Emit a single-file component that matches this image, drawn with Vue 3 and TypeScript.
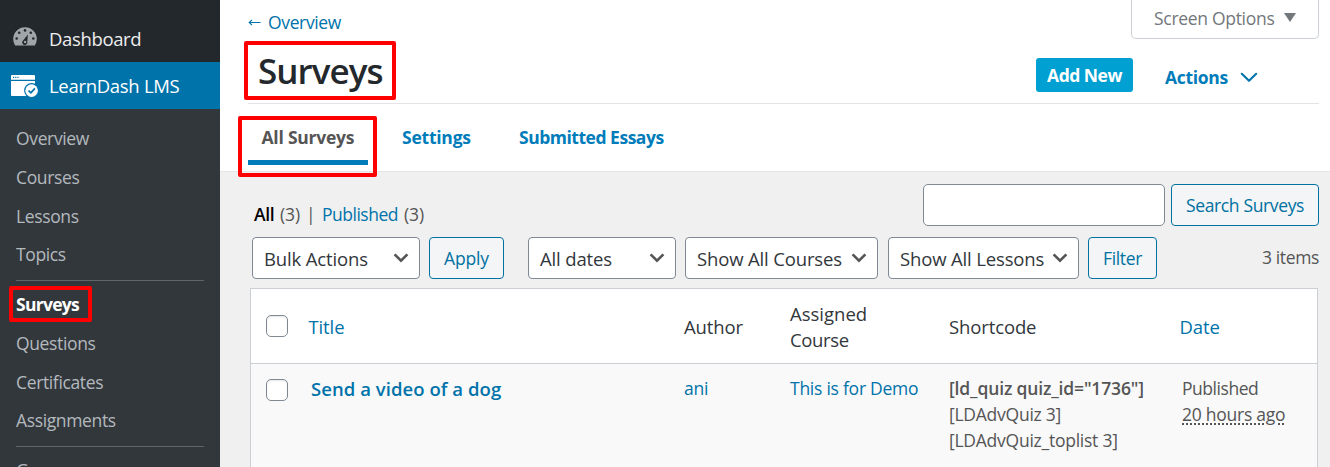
<script setup lang="ts">
interface Select {
  label: string
  cls: string
}

const menuGroups: { label: string; current?: boolean }[][] = [
  [{ label: 'Overview' }, { label: 'Courses' }, { label: 'Lessons' }, { label: 'Topics' }],
  [
    { label: 'Surveys', current: true },
    { label: 'Questions' },
    { label: 'Certificates' },
    { label: 'Assignments' },
  ],
  [{ label: 'Groups' }],
]

const tabs = [
  { label: 'All Surveys', cls: 'tab-all', active: true },
  { label: 'Settings', cls: 'tab-settings', active: false },
  { label: 'Submitted Essays', cls: 'tab-essays', active: false },
]

const filters: Select[] = [
  { label: 'All dates', cls: 'dates' },
  { label: 'Show All Courses', cls: 'courses' },
  { label: 'Show All Lessons', cls: 'lessons' },
]
</script>

<template>
  <div class="app">
    <aside class="sidebar">
      <div class="menu-top">
        <svg class="gauge" width="24" height="19" viewBox="0 0 24 19">
          <path d="M2.1 18.6A11.8 11.8 0 0 1 .2 12a11.8 11.8 0 0 1 23.6 0 11.8 11.8 0 0 1-1.9 6.6z" fill="#a0a5aa" />
          <g fill="#23282d">
            <circle cx="12" cy="3.4" r="1.3" />
            <circle cx="6.2" cy="5.8" r="1.3" />
            <circle cx="17.8" cy="5.8" r="1.3" />
            <circle cx="3.7" cy="11.5" r="1.3" />
            <circle cx="20.3" cy="11.5" r="1.3" />
            <path d="M14.9 7.4l-.6 7.2a2.6 2.6 0 1 1-4-1.3z" />
          </g>
          <circle cx="12.1" cy="15" r="1.2" fill="#a0a5aa" />
        </svg>
        <span>Dashboard</span>
      </div>
      <div class="menu-top selected">
        <svg class="window" width="28" height="24" viewBox="0 0 28 24">
          <path d="M1 1h22a1 1 0 0 1 1 1v3.8H0V2a1 1 0 0 1 1-1z" fill="#fff" />
          <path d="M0 7h24v15H1a1 1 0 0 1-1-1z" fill="#fff" />
          <g fill="#0073aa">
            <rect x="2" y="2.8" width="1.2" height="1.2" />
            <rect x="4.2" y="2.8" width="1.2" height="1.2" />
            <rect x="6.4" y="2.8" width="1.2" height="1.2" />
          </g>
          <circle cx="20.6" cy="16.6" r="7.5" fill="#0073aa" />
          <circle cx="20.6" cy="16.6" r="6.3" fill="#fff" />
          <path d="M17.5 16.6l2.4 2.3 4-4.5" fill="none" stroke="#0073aa" stroke-width="1.7" />
        </svg>
        <span>LearnDash LMS</span>
      </div>
      <nav class="submenu">
        <ul v-for="(group, g) in menuGroups" :key="g">
          <li v-for="item in group" :key="item.label" :class="{ current: item.current }">
            {{ item.label }}
            <i v-if="item.current" class="mark mark-menu"></i>
          </li>
        </ul>
      </nav>
    </aside>

    <main class="main">
      <header class="header">
        <div class="screen-options">
          Screen Options
          <svg width="12" height="9" viewBox="0 0 12 9"><path d="M0 0h12L6 9z" fill="#72777c" /></svg>
        </div>
        <a class="back">
          <svg width="13" height="9" viewBox="0 0 13 9">
            <path d="M12.5 4.5H1.2M4 1.8L1.2 4.5 4 7.2" fill="none" stroke="#0073aa" stroke-width="1.1" />
          </svg>
          Overview
        </a>
        <div class="title-row">
          <h1>Surveys<i class="mark mark-title"></i></h1>
          <button class="add-new">Add New</button>
          <div class="actions">
            <span>Actions</span>
            <svg width="18" height="11" viewBox="0 0 18 11">
              <path d="M1.8 1.8L9 8.8l7.2-7" fill="none" stroke="#0073aa" stroke-width="2.1" stroke-linecap="round" stroke-linejoin="round" />
            </svg>
          </div>
        </div>
        <nav class="tabs">
          <a v-for="t in tabs" :key="t.label" :class="[t.cls, { active: t.active }]">
            {{ t.label }}
            <i v-if="t.active" class="mark mark-tab"></i>
          </a>
        </nav>
      </header>

      <section class="content">
        <div class="row top-row">
          <div class="views">
            <b>All</b><span class="count c1">(3)</span><span class="bar">|</span
            ><span class="link">Published</span><span class="count c2">(3)</span>
          </div>
          <div class="search">
            <input type="text" aria-label="Search" />
            <button class="btn search-btn">Search Surveys</button>
          </div>
        </div>

        <div class="row filter-row">
          <div class="select bulk">
            <span>Bulk Actions</span>
            <svg width="16" height="10" viewBox="0 0 16 10"><path d="M1.6 1.4L8 7.6l6.4-6.2" /></svg>
          </div>
          <button class="btn apply">Apply</button>
          <div v-for="f in filters" :key="f.cls" class="select" :class="f.cls">
            <span>{{ f.label }}</span>
            <svg width="16" height="10" viewBox="0 0 16 10"><path d="M1.6 1.4L8 7.6l6.4-6.2" /></svg>
          </div>
          <button class="btn filter">Filter</button>
          <span class="items">3 items</span>
        </div>

        <div class="table">
          <div class="tr head">
            <div><span class="check"></span></div>
            <div class="link title-head">Title</div>
            <div>Author</div>
            <div class="assigned">Assigned<br /><span class="tight">Course</span></div>
            <div>Shortcode</div>
            <div class="link date-head">Date</div>
          </div>
          <div class="tr body">
            <div><span class="check"></span></div>
            <div class="link post-title">Send a video of a dog</div>
            <div class="link">ani</div>
            <div class="link">This is for Demo</div>
            <div class="codes"><b>[ld_quiz quiz_id="1736"]</b><br />[LDAdvQuiz 3]<br />[LDAdvQuiz_toplist 3]</div>
            <div class="date">Published<br /><span class="ago">20 hours ago</span></div>
          </div>
        </div>
      </section>
    </main>
  </div>
</template>

<style>
body {
  overflow: hidden;
}
</style>

<style scoped>
* {
  box-sizing: border-box;
}
.app {
  display: flex;
  width: 1330px;
  height: 467px;
  overflow: hidden;
  background: #f0f0f0;
  font-family: 'Open Sans', 'Noto Sans', sans-serif;
  font-size: 17.5px;
  letter-spacing: -0.36px;
  white-space: nowrap;
  color: #555;
}
.link {
  color: #0073aa;
}
.mark {
  position: absolute;
  border: 4px solid #fe0000;
  border-radius: 2px;
}

/* Sidebar */
.sidebar {
  flex: none;
  width: 220px;
  height: 467px;
  padding-top: 15px;
  overflow: hidden;
  background: #23282d;
}
.menu-top {
  display: flex;
  align-items: center;
  height: 47px;
  font-size: 18.5px;
  color: #eee;
}
.gauge {
  margin: -4px 12px 0 13px;
}
.window {
  margin: 0 10px 0 11px;
}
.menu-top.selected {
  background: #0073aa;
  color: #fff;
}
.menu-top.selected span {
  letter-spacing: -0.3px;
}
.submenu {
  height: 358px;
  padding: 10px 16px 0;
  background: #32373c;
  color: #b4b9be;
}
.submenu ul {
  margin: 0;
  padding: 0;
  list-style: none;
}
.submenu ul + ul {
  margin-top: 6px;
  padding-top: 3.9px;
  border-top: 1px solid #60656a;
}
.submenu li {
  position: relative;
  height: 38.8px;
  line-height: 38.8px;
}
.submenu .current {
  font-weight: 700;
  letter-spacing: -0.72px;
  color: #fff;
}
.mark-menu {
  left: -7px;
  top: 0.5px;
  width: 83px;
  height: 36px;
}

/* Header */
.main {
  flex: 1;
}
.header {
  position: relative;
  height: 172px;
  padding: 9px 11px 0 28px;
  background: #fff;
  border-bottom: 1px solid #e5e5e5;
}
.screen-options {
  position: absolute;
  top: 0;
  right: 11px;
  display: flex;
  gap: 10px;
  width: 188px;
  height: 39px;
  padding: 0 0 0 22px;
  border: 1px solid #ccd0d4;
  border-top: 0;
  border-radius: 0 0 5px 5px;
  line-height: 37px;
  letter-spacing: -0.3px;
  color: #72777c;
}
.screen-options svg {
  margin-top: 13px;
}
.back {
  display: flex;
  align-items: center;
  gap: 7px;
  height: 27px;
  line-height: 27px;
  color: #0073aa;
}
.title-row {
  display: flex;
  align-items: flex-start;
  height: 68px;
  border-bottom: 1px solid #e2e4e7;
}
h1 {
  position: relative;
  margin: 11px auto 0 10px;
  font-size: 35px;
  font-weight: 600;
  line-height: 48px;
  letter-spacing: -0.95px;
  color: #23282d;
}
.mark-title {
  left: -14px;
  top: -6px;
  width: 152px;
  height: 59px;
}
button {
  font: inherit;
  letter-spacing: inherit;
}
.add-new {
  width: 97px;
  height: 34px;
  margin-top: 22px;
  padding: 0;
  border: 0;
  border-radius: 3px;
  background: #00a0d2;
  color: #fff;
  font-weight: 700;
  letter-spacing: -0.5px;
}
.actions {
  display: flex;
  align-items: center;
  width: 154px;
  height: 26px;
  margin: 28px 0 0 32px;
  font-weight: 700;
  letter-spacing: -0.3px;
  color: #007cba;
}
.actions span {
  width: 75px;
}
.tabs {
  display: flex;
  gap: 21px;
}
.tabs a {
  position: relative;
  height: 61px;
  padding: 0 13px;
  border-bottom: 5px solid transparent;
  line-height: 66px;
  font-weight: 700;
  color: #007cba;
}
.tabs .tab-all {
  width: 120px;
  padding-left: 13.5px;
  letter-spacing: -0.23px;
}
.tabs .tab-settings {
  width: 96px;
  letter-spacing: -0.23px;
}
.tabs .tab-essays {
  letter-spacing: -0.48px;
}
.tabs .active {
  border-bottom-color: #007cba;
  color: #555;
}
.mark-tab {
  left: -10px;
  top: 12px;
  width: 139px;
  height: 61px;
}

/* List controls */
.content {
  padding: 12px 11px 0 30px;
}
.row {
  display: flex;
}
.top-row {
  justify-content: space-between;
  height: 53px;
}
.views {
  display: flex;
  padding: 17px 0 0 4px;
  line-height: 26px;
}
.views b {
  width: 26px;
  font-weight: 600;
  color: #000;
}
.views .count {
  letter-spacing: -0.1px;
}
.views .c1 {
  width: 26px;
}
.views .bar {
  width: 16px;
  color: #555;
}
.views .link {
  width: 82px;
  letter-spacing: -0.49px;
}
.search {
  display: flex;
  gap: 6px;
}
input {
  width: 242px;
  height: 42px;
  border: 1px solid #7e8993;
  border-radius: 5px;
  background: #fff;
}
.btn {
  height: 42px;
  padding: 0;
  border: 1px solid #0071a1;
  border-radius: 4px;
  background: #f3f5f6;
  color: #0071a1;
}
.search-btn {
  width: 148px;
}
.filter-row {
  height: 51px;
  padding-left: 2px;
}
.select {
  display: flex;
  align-items: center;
  justify-content: space-between;
  height: 42px;
  padding: 0 10px 0 11px;
  border: 1px solid #7e8993;
  border-radius: 4px;
  background: #fff;
  font-size: 18.5px;
  letter-spacing: -0.15px;
  color: #32373c;
}
.select span {
  padding-top: 1px;
}
.select path {
  fill: none;
  stroke: #555;
  stroke-width: 2.6;
}
.bulk {
  width: 168px;
}
.apply {
  width: 75px;
  margin: 0 24px 0 9px;
  letter-spacing: -0.13px;
}
.dates {
  width: 148px;
}
.courses {
  width: 193px;
  margin: 0 10px 0 9px;
}
.lessons {
  width: 191px;
}
.filter {
  width: 69px;
  margin-left: 9px;
}
.items {
  margin-left: auto;
  line-height: 41px;
}

/* Table */
.table {
  width: 1068px;
  height: 200px;
  border: 1px solid #ccd0d4;
  background: #f9f9f9;
}
.tr {
  display: grid;
  grid-template-columns: 58px 375px 106px 159px 231px 1fr;
  line-height: 26px;
}
.head {
  align-items: center;
  height: 75px;
  border-bottom: 1px solid #ccd0d4;
  background: #fff;
  font-size: 18.5px;
  letter-spacing: -0.12px;
  color: #32373c;
}
.head > div {
  padding-top: 2px;
}
.head > div:first-child {
  padding-top: 0;
}
.head .link {
  color: #0073aa;
}
.title-head,
.date-head {
  margin-left: -0.5px;
}
.head .assigned {
  letter-spacing: 0;
}
.head .tight {
  letter-spacing: -0.35px;
}
.check {
  display: block;
  width: 22px;
  height: 22px;
  margin-left: 15px;
  border: 1px solid #7e8993;
  border-radius: 5px;
  background: #fff;
  box-shadow: inset 0 1px 2px rgba(0, 0, 0, 0.1);
}
.body {
  padding-top: 11px;
  letter-spacing: -0.25px;
}
.body .check {
  margin-top: 4px;
}
.body .post-title {
  padding: 1px 0 0 2px;
  font-size: 18.5px;
  font-weight: 600;
  letter-spacing: 0.05px;
}
.codes b {
  font-weight: 600;
  letter-spacing: -0.14px;
}
.date {
  padding-left: 2px;
}
.date::first-line {
  letter-spacing: -0.45px;
}
.ago {
  text-decoration: underline dotted;
  text-decoration-thickness: 1.5px;
  text-underline-offset: 2px;
}
</style>
